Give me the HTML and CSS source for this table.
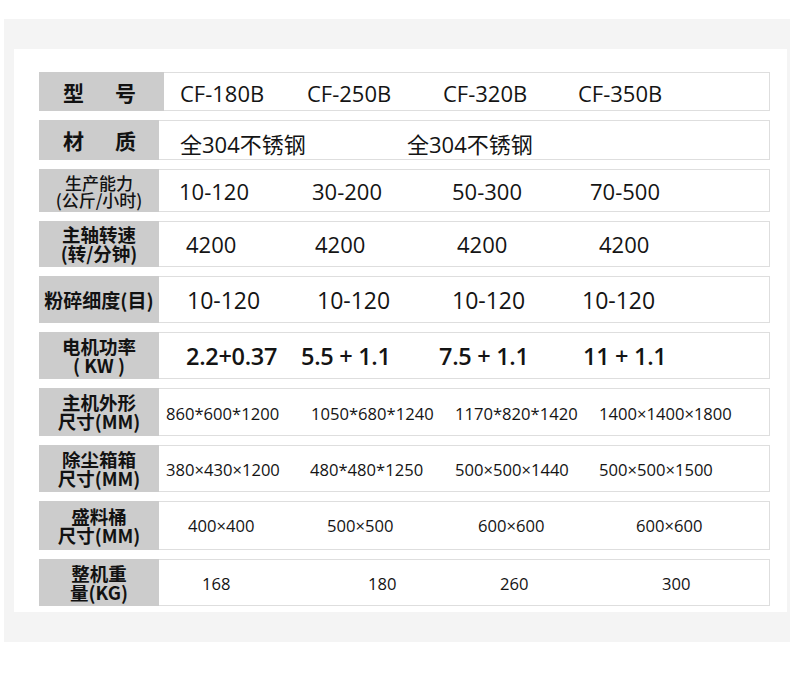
FILE: index.html
```html
<!DOCTYPE html>
<html lang="zh-CN">
<head>
<meta charset="utf-8">
<title>参数表</title>
<link rel="stylesheet" href="styles.css">
</head>
<body>
<div class="panel">
  <div class="card">
    <div class="spec">
      <div class="row r1">
        <div class="label wide spaced"><span>型</span><span>号</span></div>
        <div class="vals"><span>CF-180B</span><span>CF-250B</span><span>CF-320B</span><span>CF-350B</span></div>
      </div>
      <div class="row r2">
        <div class="label spaced"><span>材</span><span>质</span></div>
        <div class="vals"><span>全304不锈钢</span><span>全304不锈钢</span></div>
      </div>
      <div class="row r3">
        <div class="label light"><span>生产能力</span><span>(公斤/小时)</span></div>
        <div class="vals"><span>10-120</span><span>30-200</span><span>50-300</span><span>70-500</span></div>
      </div>
      <div class="row r4">
        <div class="label"><span>主轴转速</span><span>(转/分钟)</span></div>
        <div class="vals"><span>4200</span><span>4200</span><span>4200</span><span>4200</span></div>
      </div>
      <div class="row r5">
        <div class="label"><span>粉碎细度(目)</span></div>
        <div class="vals"><span>10-120</span><span>10-120</span><span>10-120</span><span>10-120</span></div>
      </div>
      <div class="row r6">
        <div class="label"><span>电机功率</span><span>( KW )</span></div>
        <div class="vals"><span>2.2+0.37</span><span>5.5 + 1.1</span><span>7.5 + 1.1</span><span>11 + 1.1</span></div>
      </div>
      <div class="row r7">
        <div class="label"><span>主机外形</span><span>尺寸(MM)</span></div>
        <div class="vals"><span>860*600*1200</span><span>1050*680*1240</span><span>1170*820*1420</span><span>1400×1400×1800</span></div>
      </div>
      <div class="row r8">
        <div class="label"><span>除尘箱箱</span><span>尺寸(MM)</span></div>
        <div class="vals"><span>380×430×1200</span><span>480*480*1250</span><span>500×500×1440</span><span>500×500×1500</span></div>
      </div>
      <div class="row r9">
        <div class="label"><span>盛料桶</span><span>尺寸(MM)</span></div>
        <div class="vals"><span>400×400</span><span>500×500</span><span>600×600</span><span>600×600</span></div>
      </div>
      <div class="row r10">
        <div class="label"><span>整机重</span><span>量(KG)</span></div>
        <div class="vals"><span>168</span><span>180</span><span>260</span><span>300</span></div>
      </div>
    </div>
  </div>
</div>
</body>
</html>
```
FILE: styles.css
```css
* { box-sizing: border-box; }
html, body { margin: 0; padding: 0; background: #ffffff; }
body {
  font-family: "Open Sans", "Noto Sans CJK SC", sans-serif;
  color: #141414;
}
.panel {
  margin: 19px 0 0 4px;
  width: 786px;
  background: #f4f4f4;
  padding: 30px 3px 30px 10px;
}
.card {
  background: #ffffff;
  padding: 23px 17px 6px 25px;
}
.spec {
  display: flex;
  flex-direction: column;
  gap: 9px;
}
.row {
  display: flex;
  border: 1px solid #dedede;
  height: 47px;
}
.label {
  width: 120px;
  margin: -1px 0 -1px -1px;
  background: #cccccc;
  display: flex;
  flex-direction: column;
  align-items: center;
  justify-content: center;
  font-family: "Noto Sans CJK SC", sans-serif;
  font-weight: 600;
  font-size: 18.5px;
  line-height: 19px;
  color: #121212;
  white-space: nowrap;
}
.label.wide { width: 125px; }
.label.light { font-weight: 500; font-size: 17px; line-height: 17px; }
.label.spaced {
  flex-direction: row;
  gap: 31px;
  font-weight: 700;
  font-size: 21px;
  line-height: 24px;
  padding-right: 4px;
}
.r2 .label.spaced { padding-right: 0; padding-left: 1px; }
.r5 .label { font-size: 19px; }
.vals {
  flex: 1;
  display: grid;
  grid-template-columns: var(--cols);
  padding-left: var(--pad);
  align-items: center;
  font-size: 22px;
  white-space: nowrap;
}
.vals span { display: block; }

.r1 { height: 39px; }
.r1 .vals { --pad: 16px; --cols: 127px 136px 135px auto; padding-top: 2px; }
.r2 { height: 40px; }
.r2 .vals { --pad: 21px; --cols: 227px auto; padding-top: 5px; }
.r3 { height: 43px; }
.r3 .vals { --pad: 20px; --cols: 133px 140px 138px auto; }
.r4 { height: 46px; }
.r4 .vals { --pad: 27px; --cols: 129px 142px 142px auto; }
.r5 .vals { --pad: 28px; --cols: 130px 135px 130px auto; font-size: 23px; }
.r6 .vals { --pad: 27px; --cols: 115px 138px 144px auto; font-size: 23.5px; font-weight: 600; letter-spacing: -0.3px; }
.r7 { height: 48px; }
.r7 .vals { --pad: 7px; --cols: 145px 144px 144px auto; font-size: 16.6px; padding-top: 3px; }
.r8 .vals { --pad: 7px; --cols: 144px 145px 144px auto; font-size: 16.6px; padding-top: 2px; }
.r9 { height: 49px; }
.r9 .vals { --pad: 29px; --cols: 139px 151px 158px auto; font-size: 16.6px; }
.r10 .vals { --pad: 43px; --cols: 166px 132px 162px auto; font-size: 16.6px; padding-top: 2px; }
```
